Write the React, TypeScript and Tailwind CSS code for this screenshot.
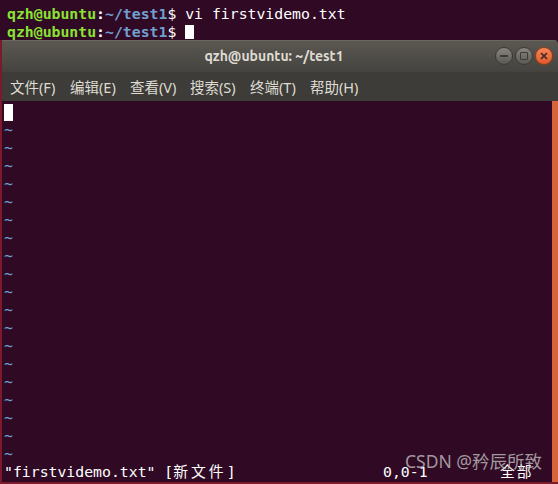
const mono = { fontFamily: '"DejaVu Sans Mono", "Noto Sans CJK SC", monospace' };

function Tilde() {
  return <div className="h-[18px] leading-[18px] text-[#729fcf]">~</div>;
}

function WinButton({ close }: { close?: boolean }) {
  if (close) {
    return (
      <div className="w-[18px] h-[18px] rounded-full bg-gradient-to-b from-[#f7865a] to-[#e0582a] border border-[#9c3a16] flex items-center justify-center">
        <svg width="8" height="8" viewBox="0 0 8 8">
          <path d="M1 1 L7 7 M7 1 L1 7" stroke="#3a2a22" strokeWidth="1.6" />
        </svg>
      </div>
    );
  }
  return null;
}

export default function App() {
  const menus = ['文件(F)', '编辑(E)', '查看(V)', '搜索(S)', '终端(T)', '帮助(H)'];
  const tildes = Array.from({ length: 19 });

  return (
    <div className="w-[558px] h-[484px] bg-[#300a24] flex flex-col overflow-hidden">
      {/* terminal behind */}
      <div className="h-[40px] pt-[5px] pl-[7px] text-[14.8px] text-white" style={mono}>
        <div className="h-[18px] leading-[18px] whitespace-pre">
          <span className="font-bold text-[#8ae234]">qzh@ubuntu</span>
          <span className="font-bold">:</span>
          <span className="font-bold text-[#729fcf]">~/test1</span>$ vi firstvidemo.txt
        </div>
        <div className="h-[18px] leading-[18px] whitespace-pre flex items-center">
          <span className="font-bold text-[#8ae234]">qzh@ubuntu</span>
          <span className="font-bold">:</span>
          <span className="font-bold text-[#729fcf]">~/test1</span>
          <span>$ </span>
          <span className="inline-block w-[9px] h-[14px] bg-white" />
        </div>
      </div>

      {/* front window */}
      <div className="flex-1 flex flex-col border-l-2 border-b-2 border-[#7a1a2c] rounded-tr-[4px] overflow-hidden">
        <div className="h-[32px] bg-gradient-to-b from-[#5b5852] to-[#45433f] border-t border-[#6a6760] flex items-center relative">
          <div
            className="flex-1 text-center text-[14px] font-bold text-[#dfdbd2] pr-[12px]"
            style={{ fontFamily: 'Ubuntu, "Open Sans", "Noto Sans", sans-serif' }}
          >
            qzh@ubuntu: ~/test1
          </div>
          <div className="absolute right-[5px] top-[6px] flex gap-[2px]">
            <div className="w-[18px] h-[18px] rounded-full bg-gradient-to-b from-[#88857f] to-[#5b5954] border border-[#3c3a36] flex items-center justify-center">
              <div className="w-[8px] h-[1.5px] bg-[#3b3a36]" />
            </div>
            <div className="w-[18px] h-[18px] rounded-full bg-gradient-to-b from-[#88857f] to-[#5b5954] border border-[#3c3a36] flex items-center justify-center">
              <div className="w-[8px] h-[8px] border-[1.5px] border-[#3b3a36] rounded-[1px]" />
            </div>
            <WinButton close />
          </div>
        </div>
        <div
          className="h-[29px] bg-[#3d3c38] flex items-center pl-[8px] pt-[3px] text-[14.5px] text-[#dfdbd2]"
          style={{ fontFamily: '"Noto Sans", "Noto Sans CJK SC", sans-serif' }}
        >
          {menus.map((m) => (
            <span key={m} className="w-[60px] whitespace-nowrap">{m}</span>
          ))}
        </div>

        <div className="flex-1 flex relative">
          <div className="flex-1 pt-[2px] pl-[2px] text-[14.8px] text-white" style={mono}>
            <div className="h-[18px] flex items-center">
              <span className="inline-block w-[9px] h-[17px] bg-white" />
            </div>
            {tildes.map((_, i) => (
              <Tilde key={i} />
            ))}
            <div className="h-[18px] leading-[18px] whitespace-pre flex">
              <span className="w-[379px]">
                "firstvidemo.txt" [<span className="tracking-[3px]">新文件</span>]
              </span>
              <span className="w-[117px]">0,0-1</span>
              <span className="tracking-[2px]">全部</span>
            </div>
          </div>
          <div className="w-[6px] bg-[#d5643c]" />
          <div
            className="absolute right-[16px] bottom-[8px] text-[17.5px] text-[#c8c8c8]/75"
            style={{ fontFamily: '"Noto Sans", "Noto Sans CJK SC", sans-serif' }}
          >
            CSDN @矜辰所致
          </div>
        </div>
      </div>
    </div>
  );
}
